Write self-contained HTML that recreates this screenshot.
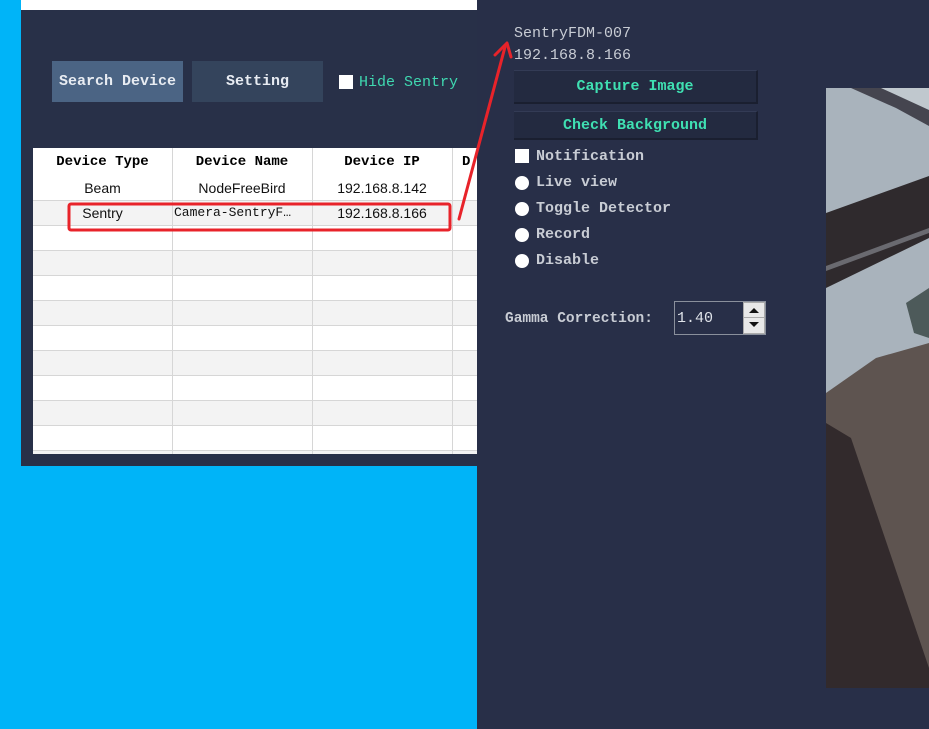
<!DOCTYPE html>
<html><head><meta charset="utf-8"><style>
*{margin:0;padding:0;box-sizing:border-box}
body{width:929px;height:729px;position:relative;overflow:hidden;background:#00b4f8;font-family:"Liberation Mono",monospace}
.a{position:absolute}
.win{left:21px;top:0;width:456px;height:466px;background:#283048}
.btn{position:absolute;height:41px;top:61px;color:#e8ecf2;font-weight:bold;font-size:15px;display:flex;align-items:center;justify-content:center}
.tbl{position:absolute;left:33px;top:148px;width:444px;height:306px;background:#fff;overflow:hidden}
.row{position:absolute;left:0;width:444px;height:25px;border-bottom:1px solid #d6d6d6}
.row.g{background:#f3f3f3}
.c{position:absolute;top:0;height:25px;line-height:24px;font-family:"Liberation Sans",sans-serif;font-size:14px;text-align:center;color:#111;white-space:nowrap;overflow:hidden}
.h{font-family:"Liberation Mono",monospace;font-weight:bold;color:#000;line-height:28px}
.vl{position:absolute;top:0;width:1px;height:306px;background:#d6d6d6}
.panel{left:477px;top:0;width:452px;height:729px;background:#282f48}
.t{position:absolute;color:#c8ccd4;font-size:15px}
.b2{position:absolute;left:514px;width:244px;background:#232a40;border-right:2px solid #1a1f30;border-bottom:2px solid #1a1f30;border-top:1px solid #333b55;color:#3fe0b2;font-weight:bold;font-size:15px;display:flex;align-items:center;justify-content:center}
.opt{position:absolute;left:515px;color:#c8ccd4;font-size:15px;font-weight:bold;line-height:16px}
.opt i{position:absolute;left:0;top:1px;width:14px;height:14px;background:#fff;border-radius:50%}
.opt span{position:absolute;left:21px;top:0;white-space:nowrap}
</style></head><body>
<div class="a win">
  <div class="a" style="left:0;top:0;width:456px;height:10px;background:#fff"></div>
</div>
<div class="btn" style="left:52px;width:131px;background:#4b6484">Search Device</div>
<div class="btn" style="left:192px;width:131px;background:#34445c">Setting</div>
<div class="a" style="left:339px;top:75px;width:14px;height:14px;background:#fff"></div>
<div class="a" style="left:359px;top:74px;color:#3fd8b0;font-size:15px">Hide Sentry</div>
<div class="tbl">
  <div class="row" style="top:0;height:28px;border-bottom:none">
    <div class="c h" style="left:0;width:139px">Device Type</div>
    <div class="c h" style="left:139px;width:140px">Device Name</div>
    <div class="c h" style="left:279px;width:140px">Device IP</div>
    <div class="c h" style="left:419px;width:30px;text-align:left;padding-left:10px">D</div>
  </div>
  <div class="row" style="top:28px">
    <div class="c" style="left:0;width:139px">Beam</div>
    <div class="c" style="left:139px;width:140px">NodeFreeBird</div>
    <div class="c" style="left:279px;width:140px">192.168.8.142</div>
  </div>
  <div class="row g" style="top:53px">
    <div class="c" style="left:0;width:139px">Sentry</div>
    <div class="c" style="left:141px;width:136px;font-family:'Liberation Mono',monospace;font-size:13px;text-align:left">Camera-SentryF…</div>
    <div class="c" style="left:279px;width:140px">192.168.8.166</div>
  </div>
  <div class="row" style="top:78px"></div>
  <div class="row g" style="top:103px"></div>
  <div class="row" style="top:128px"></div>
  <div class="row g" style="top:153px"></div>
  <div class="row" style="top:178px"></div>
  <div class="row g" style="top:203px"></div>
  <div class="row" style="top:228px"></div>
  <div class="row g" style="top:253px"></div>
  <div class="row" style="top:278px"></div>
  <div class="row g" style="top:303px"></div>
  <div class="vl" style="left:139px"></div>
  <div class="vl" style="left:279px"></div>
  <div class="vl" style="left:419px"></div>
</div>
<div class="a panel"></div>
<div class="t" style="left:514px;top:25px">SentryFDM-007</div>
<div class="t" style="left:514px;top:47px">192.168.8.166</div>
<div class="b2" style="top:70px;height:34px">Capture Image</div>
<div class="b2" style="top:111px;height:29px">Check Background</div>
<div class="opt" style="top:149px"><i style="border-radius:0;width:14px;height:14px;top:0"></i><span>Notification</span></div>
<div class="opt" style="top:175px"><i></i><span>Live view</span></div>
<div class="opt" style="top:201px"><i></i><span>Toggle Detector</span></div>
<div class="opt" style="top:227px"><i></i><span>Record</span></div>
<div class="opt" style="top:253px"><i></i><span>Disable</span></div>
<div class="t" style="left:505px;top:311px;font-weight:bold;font-size:14.5px">Gamma Correction:</div>
<div class="a" style="left:674px;top:301px;width:92px;height:34px;border:1px solid #8a909c;background:#282f48"></div>
<div class="t" style="left:677px;top:310px;color:#e0e4ea">1.40</div>
<div class="a" style="left:743px;top:302px;width:22px;height:32px;background:#e8e8e8;border:1px solid #aaa"></div>
<div class="a" style="left:743px;top:317px;width:22px;height:1px;background:#aaa"></div>
<div class="a" style="left:749px;top:308px;width:0;height:0;border-left:5px solid transparent;border-right:5px solid transparent;border-bottom:5px solid #111"></div>
<div class="a" style="left:749px;top:322px;width:0;height:0;border-left:5px solid transparent;border-right:5px solid transparent;border-top:5px solid #111"></div>
<svg class="a" style="left:826px;top:88px" width="103" height="600" viewBox="0 0 103 600">
<rect width="103" height="600" fill="#a9b3bc"/>
<polygon points="0,0 103,0 103,30 60,10 30,0" fill="#c0c8ce"/>
<polygon points="25,0 55,0 103,22 103,38 70,20" fill="#45454f"/>
<polygon points="0,125 103,88 103,150 0,200" fill="#2f2a2d"/>
<polygon points="0,178 103,140 103,145 0,183" fill="#6a6a70"/>
<polygon points="80,215 103,200 103,250 88,245" fill="#4d5a5a"/>
<polygon points="0,305 50,270 103,255 103,600 0,600" fill="#5e5450"/>
<polygon points="0,335 25,350 103,580 103,600 0,600" fill="#322a2c"/>
</svg>
<svg class="a" style="left:0;top:0" width="929" height="729">
<rect x="69" y="204" width="381" height="26" rx="2" fill="none" stroke="#e8232a" stroke-width="3"/>
<line x1="459" y1="219" x2="505" y2="47" stroke="#e8232a" stroke-width="3" stroke-linecap="round"/>
<polyline points="495,55 507,43 511,57" fill="none" stroke="#e8232a" stroke-width="3" stroke-linecap="round" stroke-linejoin="round"/>
</svg>
</body></html>
